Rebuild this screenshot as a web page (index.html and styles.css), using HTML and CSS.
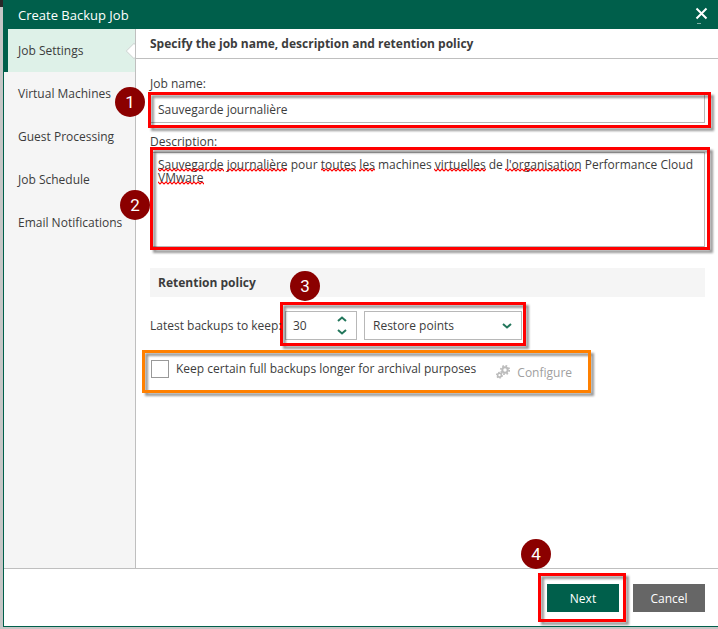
FILE: index.html
```html
<!DOCTYPE html>
<html lang="en">
<head>
    <meta charset="UTF-8">
    <meta name="viewport" content="width=device-width, initial-scale=1.0">
    <title>Create Backup Job</title>
    <link rel="stylesheet" href="styles.css">
</head>
<body>

    <div class="dialog">
        <header class="titlebar">
            <h1>Create Backup Job</h1>
            <button class="close" type="button" aria-label="Close">
                <svg width="13" height="18" viewBox="0 0 13 18" fill="none" stroke="#fff">
                    <path d="M1.5 2.5l10 10M11.5 2.5l-10 10" stroke-width="2"/>
                    <path d="M2 17.5h4" stroke="#7fb0a4"/>
                </svg>
            </button>
        </header>

        <div class="main">
            <nav class="steps">
                <a class="step active" href="#settings">Job Settings</a>
                <a class="step" href="#vms">Virtual Machines</a>
                <a class="step" href="#guest">Guest Processing</a>
                <a class="step" href="#schedule">Job Schedule</a>
                <a class="step" href="#email">Email Notifications</a>
            </nav>

            <section class="content">
                <h2>Specify the job name, description and retention policy</h2>
                <form class="form" id="job-form">
                    <div class="field">
                        <label for="job-name">Job name:</label>
                        <div class="control">
                            <input type="text" id="job-name" value="Sauvegarde journalière">
                            <span class="frame frame-name"></span>
                            <span class="badge badge-1">1</span>
                        </div>
                    </div>
                    <div class="field">
                        <label for="description">Description:</label>
                        <div class="control">
                            <textarea id="description" spellcheck="false">Sauvegarde journalière pour toutes les machines virtuelles de l'organisation Performance Cloud VMware</textarea>
                            <!-- spelling marks -->
                            <svg class="marks" width="540" height="36" aria-hidden="true">
                                <defs>
                                    <pattern id="wave" width="4" height="4" patternUnits="userSpaceOnUse">
                                        <path d="M-1 0l3 3 3-3" fill="none" stroke="#f00" stroke-width="1.2"/>
                                    </pattern>
                                    <pattern id="wave2" y="1" width="4" height="4" patternUnits="userSpaceOnUse">
                                        <path d="M-1 0l3 3 3-3" fill="none" stroke="#f00" stroke-width="1.2"/>
                                    </pattern>
                                </defs>
                                <g fill="url(#wave)">
                                    <rect x="8" y="16" width="66" height="4"/>
                                    <rect x="77" y="16" width="60" height="4"/>
                                    <rect x="171" y="16" width="35" height="4"/>
                                    <rect x="209" y="16" width="16" height="4"/>
                                    <rect x="284" y="16" width="52" height="4"/>
                                    <rect x="355" y="16" width="76" height="4"/>
                                </g>
                                <rect x="8" y="29" width="46" height="4" fill="url(#wave2)"/>
                            </svg>
                            <span class="frame frame-description"></span>
                            <span class="badge badge-2">2</span>
                        </div>
                    </div>

                    <h3>Retention policy</h3>
                    <div class="retention">
                        <label for="keep">Latest backups to keep:</label>
                        <div class="control retention-controls">
                            <div class="spinner">
                                <input type="text" id="keep" inputmode="numeric" value="30">
                                <div class="arrows">
                                    <button type="button" aria-label="Increase"><svg width="10" height="6" viewBox="0 0 10 6"><path d="M1 5l4-3.5L9 5"/></svg></button>
                                    <button type="button" aria-label="Decrease"><svg width="10" height="6" viewBox="0 0 10 6"><path d="M1 1l4 3.5L9 1"/></svg></button>
                                </div>
                            </div>
                            <div class="select">
                                <select id="unit" aria-label="Retention unit">
                                    <option>Restore points</option>
                                </select>
                                <svg class="caret" width="10" height="6" viewBox="0 0 10 6"><path d="M1 1l4 3.5L9 1"/></svg>
                            </div>
                            <span class="frame frame-retention"></span>
                            <span class="badge badge-3">3</span>
                        </div>
                    </div>

                    <div class="archive control">
                        <input type="checkbox" id="archive">
                        <label for="archive">Keep certain full backups longer for archival purposes</label>
                        <button class="configure" type="button" disabled>
                            <svg width="14" height="14" viewBox="0 0 14 14" fill="none" stroke="#bcbcbc">
                                <circle cx="9" cy="5" r="2.7" stroke-width="2"/>
                                <circle cx="9" cy="5" r="4.2" stroke-width="1.8" stroke-dasharray="1.65 1.65"/>
                                <circle cx="3.5" cy="10.2" r="1.9" stroke-width="1.6"/>
                                <circle cx="3.5" cy="10.2" r="2.9" stroke-width="1.2" stroke-dasharray="1.5 1.5"/>
                            </svg>
                            Configure
                        </button>
                        <span class="frame frame-archive"></span>
                    </div>
                </form>
            </section>
        </div>

        <footer class="actions">
            <div class="control">
                <button class="btn primary" type="submit" form="job-form">Next</button>
                <span class="frame frame-next"></span>
                <span class="badge badge-4">4</span>
            </div>
            <button class="btn" type="button">Cancel</button>
        </footer>
    </div>

</body>
</html>
```
FILE: styles.css
```css
* {
    margin: 0;
    padding: 0;
    box-sizing: border-box;
}

body {
    font-family: "Open Sans", sans-serif;
    font-size: 12px;
    color: #3c3c3c;
    background: linear-gradient(#282828 7px, #c6c6c6 7px);
    padding: 0 0 2px 3px;
    overflow: hidden;
}

input, textarea, select, button {
    font: inherit;
    color: inherit;
}

a {
    color: inherit;
    text-decoration: none;
}

button {
    border: none;
    background: none;
    cursor: pointer;
}

.dialog {
    display: flex;
    flex-direction: column;
    min-height: calc(100vh - 2px);
    background: #fff;
    border: 1px solid #005f4b;
    border-width: 0 0 1px 1px;
}

.titlebar {
    display: flex;
    justify-content: space-between;
    align-items: center;
    height: 29px;
    padding: 0 10px 0 14px;
    background: #005f4b;
    color: #fff;
}

.titlebar h1 {
    font-size: 13px;
    font-weight: normal;
}

.close {
    height: 18px;
}

.close svg {
    display: block;
}

.main {
    display: flex;
    flex: 1;
    border-bottom: 1px solid #bfbfbf;
}

.steps {
    width: 132px;
    flex-shrink: 0;
    background: #f5f5f5;
    border-right: 1px solid #bfbfbf;
}

.step {
    display: block;
    height: 43px;
    line-height: 43px;
    padding-left: 14px;
    white-space: nowrap;
}

.step.active {
    position: relative;
    overflow: hidden;
    padding-left: 10px;
    border-left: 4px solid #005f4b;
    background: #def1e8;
}

.step.active::after {
    content: "";
    position: absolute;
    right: -5px;
    top: 16px;
    width: 10px;
    height: 10px;
    background: #fff;
    border: 1px solid #cfdad5;
    transform: rotate(45deg);
}

.content {
    flex: 1;
}

.content h2 {
    height: 30px;
    line-height: 29px;
    padding-left: 14px;
    font-size: 12px;
    border-bottom: 1px solid #bfbfbf;
}

.form {
    padding: 16px 13px 0 14px;
}

.field {
    margin-bottom: 10px;
}

.field label {
    display: block;
    height: 18px;
    line-height: 18px;
    margin-bottom: 1px;
}

.control {
    position: relative;
}

.field input, .field textarea {
    display: block;
    width: 100%;
    border: 1px solid #b8b8b8;
    outline: none;
}

.field input {
    height: 29px;
    padding: 2px 7px 0;
}

.field textarea {
    height: 95px;
    padding: 5px 7px;
    line-height: 13px;
    resize: none;
}

.marks {
    position: absolute;
    left: 0;
    top: 0;
    pointer-events: none;
}

.form h3 {
    height: 29px;
    line-height: 29px;
    margin: 21px 0 14px;
    padding-left: 8px;
    font-size: 12px;
    background: #f5f5f5;
}

.retention {
    display: flex;
    align-items: center;
}

.retention > label {
    position: relative;
    z-index: 1;
    width: 135px;
    white-space: nowrap;
}

.retention-controls {
    display: flex;
    gap: 7px;
}

.spinner {
    display: flex;
    width: 72px;
    height: 29px;
    border: 1px solid #b8b8b8;
}

.spinner input {
    flex: 1;
    min-width: 0;
    padding-left: 7px;
    border: none;
    outline: none;
}

.arrows {
    display: flex;
    flex-direction: column;
    justify-content: center;
    gap: 7px;
    width: 28px;
}

.arrows button {
    height: 6px;
}

.arrows svg {
    display: block;
    margin: 0 auto;
}

.arrows path, .caret path {
    fill: none;
    stroke: #23775c;
    stroke-width: 2;
}

.select {
    position: relative;
    width: 158px;
}

.select select {
    width: 100%;
    height: 29px;
    padding-left: 8px;
    border: 1px solid #b8b8b8;
    background: #fff;
    appearance: none;
}

.caret {
    position: absolute;
    right: 10px;
    top: 12px;
    pointer-events: none;
}

.archive {
    display: flex;
    align-items: flex-start;
    margin-top: 10px;
    padding-top: 10px;
    height: 43px;
}

.archive input {
    width: 18px;
    height: 18px;
    margin: 0 7px 0 1px;
    border: 1px solid #999;
    background: #fff;
    appearance: none;
}

.archive input:checked {
    background: #005f4b;
}

.archive label {
    line-height: 18px;
    white-space: nowrap;
}

.configure {
    display: flex;
    align-items: center;
    gap: 7px;
    height: 18px;
    margin: 3px 0 0 20px;
    color: #a0a0a0;
}

.actions {
    display: flex;
    justify-content: flex-end;
    align-items: center;
    gap: 14px;
    height: 57px;
    padding: 1px 13px 0 0;
}

.btn {
    display: block;
    width: 72px;
    height: 28px;
    background: #666;
    color: #fff;
}

.btn.primary {
    background: #005f4b;
}

/* callouts */
.frame {
    position: absolute;
    border: 3px solid #f00;
    filter: drop-shadow(3px 3px 1px rgba(0, 0, 0, 0.4));
    pointer-events: none;
}

.frame-name {
    inset: -2px -6px -5px -2px;
}

.frame-description {
    inset: -5px -5px -3px 0;
}

.frame-retention {
    inset: -9px -4px -6px -5px;
}

.frame-archive {
    top: 0;
    bottom: 0;
    left: -8px;
    width: 449px;
    border-color: #ff8000;
}

.frame-next {
    inset: -11px -7px -10px -9px;
}

.badge {
    position: absolute;
    width: 30px;
    height: 30px;
    border-radius: 50%;
    background: #8b0000;
    color: #fff;
    font: 17px/30px Roboto, sans-serif;
    text-align: center;
}

.badge-1 {
    left: -35px;
    top: -7px;
}

.badge-2 {
    left: -30px;
    top: 38px;
}

.badge-3 {
    left: 5px;
    top: -40px;
}

.badge-4 {
    left: -26px;
    top: -45px;
}
```
